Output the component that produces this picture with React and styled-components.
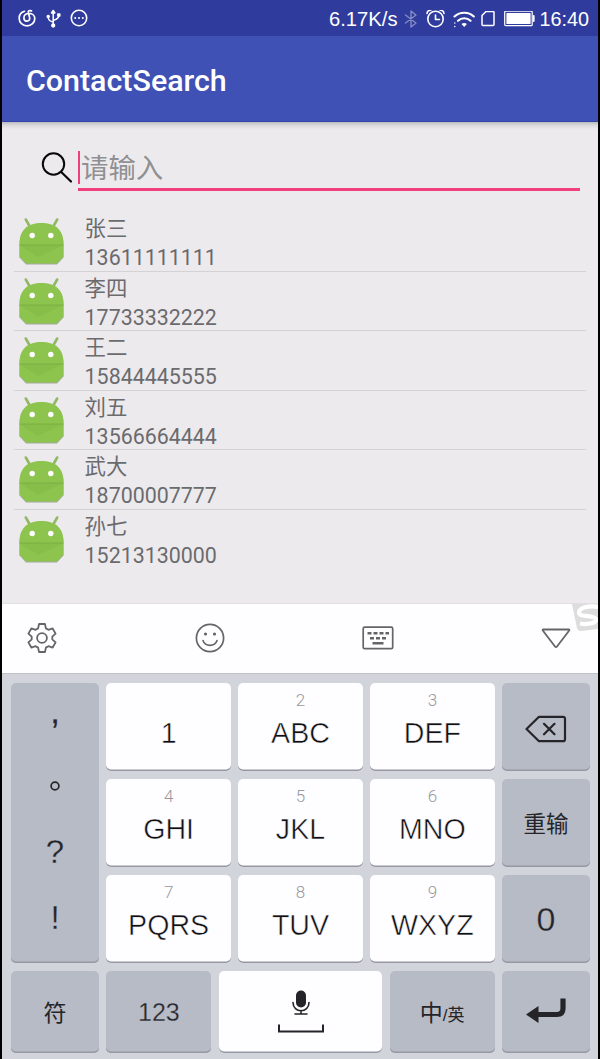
import React from "react";
import styled, { createGlobalStyle } from "styled-components";

const Global = createGlobalStyle`
  * { box-sizing: border-box; }
  body { margin: 0; background: #000; }
`;

const Phone = styled.div`
  width: 600px;
  height: 1059px;
  padding: 0 2px;
  background: #000;
  display: flex;
  flex-direction: column;
  overflow: hidden;
  font-family: Roboto, "Noto Sans CJK SC", sans-serif;
`;

const StatusBar = styled.header`
  height: 36px;
  flex: none;
  padding: 0 9px 0 16px;
  background: #303c9d;
  color: #fff;
  display: flex;
  align-items: center;
  justify-content: space-between;
  font: 19.8px/36px "Liberation Sans", sans-serif;
`;

const StatusGroup = styled.div`
  display: flex;
  align-items: center;
  padding-top: ${(p) => p.$drop || 0}px;
`;

const Glyph = styled.svg`
  display: block;
  flex: none;
  width: ${(p) => p.$w}px;
  height: ${(p) => p.$h}px;
  margin-left: ${(p) => p.$gap || 0}px;
  opacity: ${(p) => p.$opacity || 1};
  fill: none;
  stroke: currentColor;
  stroke-width: ${(p) => p.$stroke || 1.5};
  stroke-linecap: round;
  stroke-linejoin: round;
`;

const Speed = styled.span`
  font-size: 20.2px;
`;

const Clock = styled.span`
  margin-left: 4px;
`;

const AppBar = styled.div`
  height: 86px;
  flex: none;
  padding: 3px 24px 0;
  display: flex;
  align-items: center;
  background: #3f51b5;
  border-bottom: 1px solid #3344ad;
  color: #fff;
  font-size: 30.4px;
  font-weight: 500;
`;

const Content = styled.main`
  height: 481px;
  flex: none;
  padding: 25px 12px 0;
  background: linear-gradient(#bcbcbe 0, #d8d8da 3px, #eceaed 7px);
`;

const SearchRow = styled.label`
  height: 65px;
  padding-left: 26px;
  display: flex;
  align-items: flex-start;
`;

const Field = styled.div`
  width: 502px;
  height: 44px;
  margin-left: 5px;
  padding-top: 4px;
  border-bottom: 3px solid #f13f7e;
  display: flex;
  align-items: flex-start;
  color: #909092;
  font: 27.4px/31px "Noto Sans CJK SC", sans-serif;
`;

const Caret = styled.i`
  width: 2px;
  height: 33px;
  margin-right: 1px;
  background: #f13f7e;
`;

const List = styled.ul`
  list-style: none;
  margin: 0;
  padding: 0;
`;

const Contact = styled.li`
  height: 59.6px;
  padding: 3px 0 0 5px;
  display: flex;
  border-bottom: 1.4px solid #d3d2d5;
  &:last-child { border-bottom-color: transparent; }
`;

const ContactText = styled.div`
  margin-left: 19.6px;
  color: #6b6a6d;
  font-size: 21.4px;
`;

const Name = styled.div`
  height: 27px;
  line-height: 24px;
  font-family: "Noto Sans CJK SC", sans-serif;
`;

const PhoneNumber = styled.div`
  line-height: 31px;
`;

const Toolbar = styled.div`
  position: relative;
  height: 70px;
  flex: none;
  padding: 0 0 1px 24px;
  display: flex;
  align-items: center;
  background: #fefdff;
  border-top: 1px solid #e0e0e1;
  color: #656568;
  overflow: hidden;
`;

const Brand = styled.svg`
  position: absolute;
  top: 0;
  right: 0;
  width: 27px;
  height: 28px;
`;

const Keyboard = styled.section`
  flex: 1;
  padding: 9px 8px 0 9px;
  background: #d1d4da;
  border-top: 1px solid #bfc2c8;
  color: #252529;
  font-family: "Liberation Sans", "Noto Sans CJK SC", sans-serif;
`;

const KeyGrid = styled.div`
  display: grid;
  grid-template-columns: 88px repeat(3, 1fr) 88px;
  grid-template-rows: repeat(3, 88px);
  gap: 8px 7.4px;
`;

const BottomRow = styled.div`
  margin-top: 8px;
  height: 82px;
  display: grid;
  grid-template-columns: 88px 105px 1fr 105px 88px;
  gap: 7.4px;
`;

const Key = styled.div`
  display: flex;
  flex-direction: column;
  align-items: center;
  justify-content: center;
  border-radius: 5px;
  background: ${(p) => (p.$light ? "#fefdff" : "#b7bbc5")};
  box-shadow: inset 0 -1.5px 0 #9699a4;
  font-size: ${(p) => p.$size || 28}px;
`;

const LetterKey = styled(Key)`
  justify-content: flex-start;
  padding-top: 7px;
`;

const Digit = styled.span`
  height: 20px;
  font: 300 17px/20px Roboto, sans-serif;
  color: #98989c;
`;

const Letters = styled.span`
  margin-top: 6px;
  font-size: 28.6px;
  line-height: 34px;
  color: #101013;
  -webkit-text-stroke: 0.5px #fefdff;
`;

const Label = styled.span`
  line-height: 1;
  padding-top: ${(p) => p.$drop || 0}px;
  -webkit-text-stroke: ${(p) => (p.$thin ? "0.3px #b7bbc5" : "0")};
`;

const SideKey = styled(Key)`
  grid-row: span 3;
  justify-content: flex-start;
  padding-top: 4px;
`;

const Mark = styled.span`
  height: 66px;
  display: flex;
  align-items: center;
  padding-bottom: ${(p) => p.$lift || 0}px;
  font-size: 33px;
  -webkit-text-stroke: 0.3px ${(p) => (p.$bold ? "#252529" : "#b7bbc5")};
`;

const Slash = styled.small`
  font-size: 17px;
`;

const Robot = () => (
  <Glyph $w={46} $h={50} viewBox="0 0 46 50">
    <path d="M6.800 4.500 10.500 11M38.200 4.500l-3.700 6.500" stroke="#91b865" strokeWidth="2.600" />
    <path d="M.5 30C.5 15.500 9 9 22.500 9s22 6.500 22 21v12.500L38 49.500H7L.5 42.500Z" fill="#a5aaa0" stroke="none" />
    <path d="M.5 29C.5 14.500 9 8 22.500 8s22 6.500 22 21v12.500L38 48.500H7L.5 41.500Z" fill="#8dc44e" stroke="none" />
    <path d="M.5 30h44L19 42Z" fill="#87bd49" stroke="none" />
    <path d="M1 30h43" stroke="#7cae42" strokeWidth="1" />
    <circle cx="13.200" cy="20.500" r="2.700" fill="#fff" stroke="none" />
    <circle cx="31.800" cy="20.500" r="2.700" fill="#fff" stroke="none" />
  </Glyph>
);

// Six flat-topped teeth, each described by (angle, radius) corners.
const gearPoints = [0, 60, 120, 180, 240, 300]
  .flatMap((tooth) =>
    [[-22, 10.4], [-12, 14.3], [12, 14.3], [22, 10.4]].map(([offset, radius]) => {
      const angle = ((tooth + offset - 90) * Math.PI) / 180;
      return `${(16 + radius * Math.cos(angle)).toFixed(2)},${(16 + radius * Math.sin(angle)).toFixed(2)}`;
    })
  )
  .join(" ");

const contacts = [
  ["张三", "13611111111"],
  ["李四", "17733332222"],
  ["王二", "15844445555"],
  ["刘五", "13566664444"],
  ["武大", "18700007777"],
  ["孙七", "15213130000"],
];

const Letter = ({ digit, children }) => (
  <LetterKey $light>
    <Digit>{digit}</Digit>
    <Letters>{children}</Letters>
  </LetterKey>
);

export default function App() {
  return (
    <Phone>
      <Global />
      <StatusBar>
        <StatusGroup>
          <Glyph $w={18} $h={18} $stroke={1.7} viewBox="0 0 18 18">
            <path d="M6.500 2.300C3.300 3.200 1.200 6 1.200 9.400c0 4.200 3.400 7.400 7.800 7.400s7.800-3.200 7.800-7.300c0-3-2.600-5.200-5.900-5.200C7.800 4.300 5.900 6.500 5.900 8.900c0 2 1.300 3.300 3 3.300 2.200 0 3.200-1.700 2.700-3.800L10.300 3.700C9.900 2 11.300 1 13.500 1.900" />
          </Glyph>
          <Glyph $w={16} $h={19} $gap={10} $stroke={1.5} viewBox="0 0 16 19">
            <path d="M7.200 16V2M2.200 8c0 3.500 2 4.200 5 5M12.800 6.500c0 3.200-2.500 3.900-5.600 5" />
            <path d="M5.500 4 7.200 1.500 8.900 4Z" fill="currentColor" />
            <circle cx="7.200" cy="16.500" r="1.400" fill="currentColor" />
            <circle cx="2.200" cy="7.500" r="1" fill="currentColor" />
            <path d="M11.800 5h2v2h-2Z" fill="currentColor" />
          </Glyph>
          <Glyph $w={18} $h={18} $gap={8} $stroke={1.6} viewBox="0 0 18 18">
            <circle cx="9" cy="9" r="7.700" />
            <path d="M5.200 9h.01M9 9h.01M12.800 9h.01" strokeWidth="2" />
          </Glyph>
        </StatusGroup>
        <StatusGroup $drop={2}>
          <Speed>6.17K/s</Speed>
          <Glyph $w={14} $h={18} $gap={7} $opacity={0.4} $stroke={1.4} viewBox="0 0 14 18">
            <path d="m1.500 5 10.500 8-5 4V1l5 4-10.500 8" />
          </Glyph>
          <Glyph $w={19} $h={19} $gap={7.5} $stroke={1.6} viewBox="0 1 19 19">
            <circle cx="9.500" cy="10" r="7.700" />
            <path d="M9.500 6v4.500h4M1 4.500C1.200 2.500 2.500 1.200 4.800 1.300M18 4.500C17.800 2.500 16.500 1.200 14.200 1.300" />
          </Glyph>
          <Glyph $w={22} $h={17} $gap={8} $stroke={2.1} viewBox="0 0 22 17">
            <path d="M1.500 5.500C7 .5 15.500.5 20.800 5.500M5 9.700c3.500-3.300 9-3.300 12.500 0" />
            <path d="m8.500 13 2.700 3 2.700-3c-1.500-1.200-3.900-1.200-5.400 0Z" fill="currentColor" strokeWidth="0" />
            <path d="M1.800 12v.01M1.800 15.500v.01" strokeWidth="1.500" />
          </Glyph>
          <Glyph $w={14} $h={17} $gap={6.5} viewBox="0 1 14 17">
            <path d="M5 1.500h7a1 1 0 0 1 1 1v12a1 1 0 0 1-1 1H2a1 1 0 0 1-1-1V5.500Z" />
          </Glyph>
          <Glyph $w={31} $h={16} $gap={9} $stroke={1.2} viewBox="0 .5 31 16">
            <rect x=".7" y=".7" width="27.500" height="14.500" rx="1" />
            <path d="M3 3h23v10H3Z" fill="currentColor" />
            <path d="M29.700 5.500v5" strokeWidth="1.800" />
          </Glyph>
          <Clock>16:40</Clock>
        </StatusGroup>
      </StatusBar>
      <AppBar>ContactSearch</AppBar>
      <Content>
        <SearchRow>
          <Glyph $w={33} $h={40} $stroke={2} viewBox="0 0 33 40" color="#080808">
            <circle cx="13.500" cy="17" r="10.700" />
            <path d="m21.200 25 9.800 9.500" strokeWidth="2.200" />
          </Glyph>
          <Field><Caret />请输入</Field>
        </SearchRow>
        <List>
          {contacts.map(([name, number]) => (
            <Contact key={number}>
              <Robot />
              <ContactText>
                <Name>{name}</Name>
                <PhoneNumber>{number}</PhoneNumber>
              </ContactText>
            </Contact>
          ))}
        </List>
      </Content>
      <Toolbar>
        <Glyph $w={32} $h={32} $stroke={1.8} viewBox="0 0 32 32">
          <polygon points={gearPoints} />
          <circle cx="16" cy="16" r="4.900" />
        </Glyph>
        <Glyph $w={30} $h={30} $gap={137} $stroke={1.7} viewBox="0 0 30 30">
          <circle cx="15" cy="15" r="13.600" />
          <path d="M8 17.500c2.200 6.500 11.800 6.500 14 0" />
          <path d="M10.500 11v.01M19.500 11v.01" strokeWidth="3.200" />
        </Glyph>
        <Glyph $w={32} $h={24} $gap={137} $stroke={1.7} viewBox="0 0 32 24">
          <rect x="1.200" y="1.200" width="29.500" height="21.500" rx="1.500" />
          <path d="M5.500 7.200h4M11.500 7.200h4M17.500 7.200h4M23.500 7.200h3.500M8 12.300h4M14 12.300h4M20 12.300h4M10.500 17.200h11" strokeWidth="2.500" strokeLinecap="butt" />
        </Glyph>
        <Glyph $w={30} $h={21} $gap={147} $stroke={1.8} viewBox="0 0 30 21">
          <path d="M2.300 1.500h25.400q1 0 .5 1L16 18.500q-1 1.300-2 0L1.800 2.500q-.5-1 .5-1Z" />
        </Glyph>
        <Brand viewBox="0 0 27 28">
          <path d="M1 0h26v25L10 27q-3 0-4-3Z" fill="#deddde" />
          <path d="M28 3C17 1 8 4 8 8.500c0 5.500 15 2 17 6.500 1 4-8 6-16 4.500" fill="none" stroke="#fff" strokeWidth="4.200" />
        </Brand>
      </Toolbar>
      <Keyboard>
        <KeyGrid>
          <SideKey>
            <Mark $bold $lift={16}>,</Mark>
            <Mark>
              <Glyph $w={12} $h={12} $stroke={1.7} viewBox="0 0 12 12">
                <circle cx="6" cy="6" r="3.900" />
              </Glyph>
            </Mark>
            <Mark>?</Mark>
            <Mark>!</Mark>
          </SideKey>
          <Letter>1</Letter>
          <Letter digit="2">ABC</Letter>
          <Letter digit="3">DEF</Letter>
          <Key>
            <Glyph $w={42} $h={31} $stroke={2.2} viewBox="0 -3 42 31">
              <path d="M14 1.800h24a2 2 0 0 1 2 2v20.400a2 2 0 0 1-2 2H14L1.500 14ZM19 8.800l10.500 10.500M29.500 8.800 19 19.300" />
            </Glyph>
          </Key>
          <Letter digit="4">GHI</Letter>
          <Letter digit="5">JKL</Letter>
          <Letter digit="6">MNO</Letter>
          <Key $size={22.5}><Label $drop={5}>重输</Label></Key>
          <Letter digit="7">PQRS</Letter>
          <Letter digit="8">TUV</Letter>
          <Letter digit="9">WXYZ</Letter>
          <Key $size={34}><Label $drop={0} $thin>0</Label></Key>
        </KeyGrid>
        <BottomRow>
          <Key $size={23}><Label $drop={2}>符</Label></Key>
          <Key $size={25}><Label $drop={1} $thin>123</Label></Key>
          <Key $light>
            <Glyph $w={48} $h={44} $stroke={2} viewBox="0 .5 48 44">
              <rect x="19" y="1" width="10" height="17" rx="5" fill="currentColor" stroke="none" />
              <path d="M16 13c0 11 16 11 16 0M24 21v3M18 24.500h12" strokeWidth="1.600" />
              <path d="M2 35v7h44v-7" strokeLinecap="butt" strokeLinejoin="miter" />
            </Glyph>
          </Key>
          <Key $size={23}><Label $drop={2}>中<Slash>/英</Slash></Label></Key>
          <Key>
            <Glyph $w={42} $h={28} viewBox="0 1.500 42 28">
              <path d="M12 18h20q6 0 6-6V2" strokeWidth="5.200" strokeLinecap="butt" />
              <path d="M1 18 13.500 9.500v17Z" fill="currentColor" stroke="none" />
            </Glyph>
          </Key>
        </BottomRow>
      </Keyboard>
    </Phone>
  );
}
